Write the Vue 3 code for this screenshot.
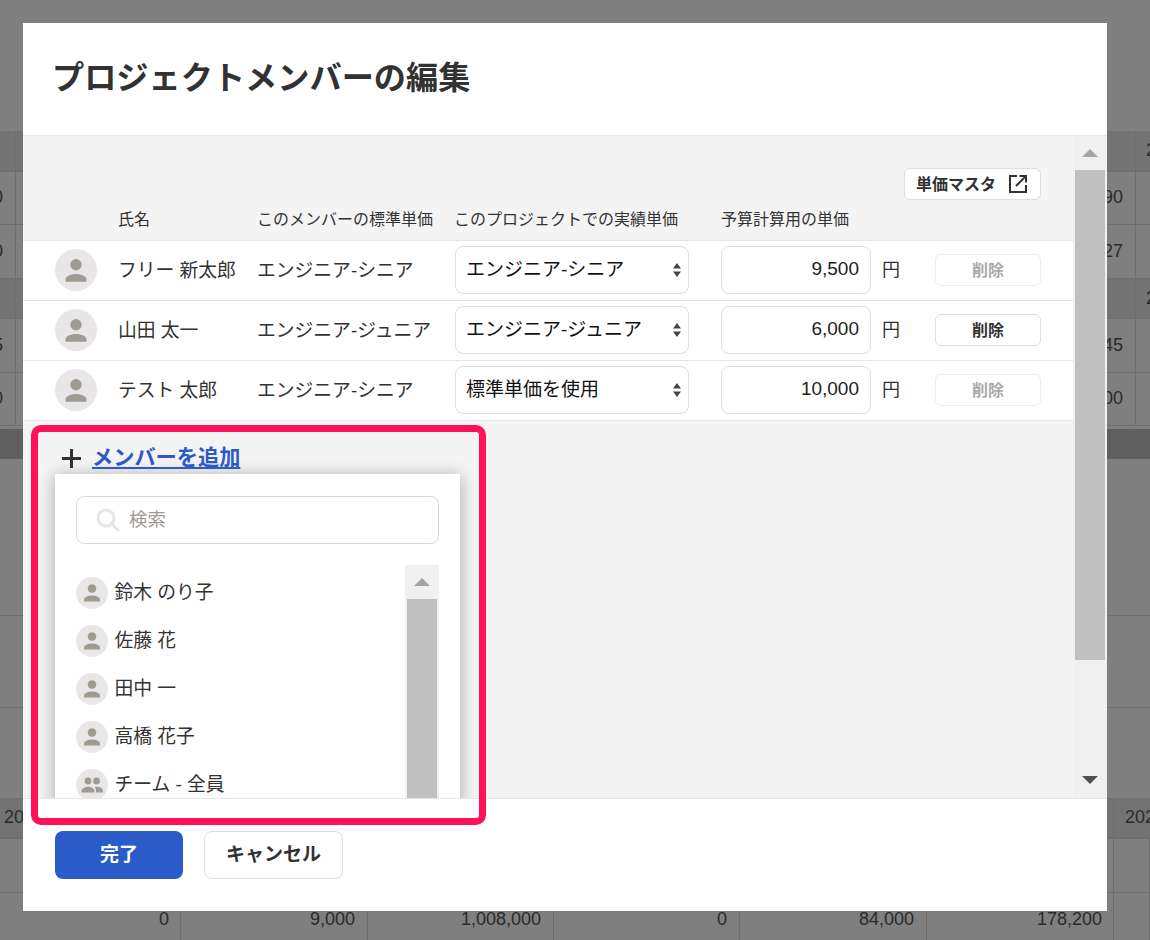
<script setup>
const upperRows = [
  { dark: true, left: '', mid: '', right: '2' },
  { left: '0', mid: '90', right: '' },
  { left: '0', mid: '27', right: '' },
  { dark: true, left: '', mid: '', right: '2' },
  { left: '5', mid: '45', right: '' },
  { left: '0', mid: '00', right: '' }
]
const totals = ['0', '9,000', '1,008,000', '0', '84,000', '178,200', '']
const members = [
  { name: 'フリー 新太郎', std: 'エンジニア-シニア', sel: 'エンジニア-シニア', price: '9,500', canDelete: false },
  { name: '山田 太一', std: 'エンジニア-ジュニア', sel: 'エンジニア-ジュニア', price: '6,000', canDelete: true },
  { name: 'テスト 太郎', std: 'エンジニア-シニア', sel: '標準単価を使用', price: '10,000', canDelete: false }
]
const options = ['標準単価を使用', 'エンジニア-シニア', 'エンジニア-ジュニア']
const candidates = [
  { name: '鈴木 のり子' },
  { name: '佐藤 花' },
  { name: '田中 一' },
  { name: '高橋 花子' },
  { name: 'チーム - 全員', team: true }
]
</script>

<template>
  <div class="page">
    <div class="bg">
      <div class="bg-top"></div>
      <div v-for="(r, i) in upperRows" :key="i" class="bg-row" :class="{ dark: r.dark }">
        <div class="bg-cell">{{ r.left }}</div>
        <div class="bg-cell">{{ r.mid }}</div>
        <div class="bg-cell start">{{ r.right }}</div>
      </div>
      <div class="bg-bar"></div>
      <div class="bg-plain first"></div>
      <div class="bg-plain second"></div>
      <div class="bg-plain third"></div>
      <div class="bg-lower dark short">
        <div class="bg-cell start head-first">2024</div>
        <div class="bg-cell"></div>
        <div class="bg-cell"></div>
        <div class="bg-cell"></div>
        <div class="bg-cell"></div>
        <div class="bg-cell"></div>
        <div class="bg-cell start">2024</div>
      </div>
      <div class="bg-lower mid"><div v-for="n in 7" :key="n" class="bg-cell"></div></div>
      <div class="bg-lower">
        <div v-for="(t, i) in totals" :key="i" class="bg-cell">{{ t }}</div>
      </div>
    </div>

    <div class="overlay">
      <div class="modal">
        <header class="modal-head">
          <h1 class="title">プロジェクトメンバーの編集</h1>
        </header>

        <div class="modal-body">
          <div class="content">
            <div class="tools">
              <button class="btn-small master" type="button">
                <span class="master-label">単価マスタ</span>
                <svg class="ext" viewBox="0 0 18 18" width="18" height="18" fill="none" stroke="#323232" stroke-width="2">
                  <path d="M8 1H1v16h16v-7" />
                  <path d="M7 11 16.600 1.400" />
                  <path d="M10.500 1h6.500v6.500" />
                </svg>
              </button>
            </div>

            <div class="grid head-row">
              <div></div>
              <div class="nudge">氏名</div>
              <div class="nudge">このメンバーの標準単価</div>
              <div class="nudge">このプロジェクトでの実績単価</div>
              <div>予算計算用の単価</div>
            </div>

            <div class="table">
              <div v-for="m in members" :key="m.name" class="grid row">
                <svg class="avatar-lg" viewBox="0 0 32 32">
                  <circle cx="16" cy="16" r="16" fill="#e8e6e6" />
                  <circle cx="16" cy="12" r="4.300" fill="#9f9a92" />
                  <path d="M8 25v-2c0-2.800 5.300-4 8-4s8 1.200 8 4v2z" fill="#9f9a92" />
                </svg>
                <div class="nudge cell-text">{{ m.name }}</div>
                <div class="nudge cell-text">{{ m.std }}</div>
                <div class="select-wrap">
                  <select class="select" :value="m.sel">
                    <option v-for="o in options" :key="o" :value="o">{{ o }}</option>
                  </select>
                  <svg class="updown" viewBox="0 0 8 14" width="8" height="14">
                    <path d="M4 0 8 5.500H0z" fill="#444" />
                    <path d="M4 14 8 8.500H0z" fill="#444" />
                  </svg>
                </div>
                <input class="price" type="text" :value="m.price" />
                <div class="yen">円</div>
                <button class="btn-small del" :class="{ off: !m.canDelete }" type="button">削除</button>
              </div>
            </div>

            <div class="add">
              <svg class="plus" viewBox="0 0 19 19" width="19" height="19" stroke="#323232" stroke-width="3" fill="none">
                <path d="M9.500 0v19M0 9.500h19" />
              </svg>
              <a class="add-link" href="#">メンバーを追加</a>
            </div>

            <div class="dropdown">
              <div class="search">
                <svg class="search-icon" viewBox="0 0 24 24" width="24" height="24" fill="none" stroke="#e6e6e6" stroke-width="3">
                  <circle cx="10" cy="10" r="8" />
                  <path d="M16 16l7 7" />
                </svg>
                <input class="search-input" type="text" placeholder="検索" />
              </div>
              <div class="list-wrap">
                <ul class="list">
                  <li v-for="c in candidates" :key="c.name" class="item">
                    <svg class="avatar-sm" viewBox="0 0 32 32">
                      <circle cx="16" cy="16" r="16" fill="#e8e6e6" />
                      <template v-if="c.team">
                        <circle cx="12" cy="12" r="3.400" fill="#9f9a92" />
                        <circle cx="20.500" cy="12" r="3.400" fill="#9f9a92" />
                        <path d="M5.500 23.500v-1.700c0-2.300 4-4 6.500-4s6.500 1.700 6.500 4v1.700z" fill="#9f9a92" />
                        <path d="M20 23.500v-1.900c0-1.500-.5-2.600-1.400-3.400.7-.2 1.500-.4 2.200-.4 2.500 0 6.200 1.500 6.200 3.800v1.900z" fill="#9f9a92" />
                      </template>
                      <template v-else>
                        <circle cx="16" cy="11.500" r="4.300" fill="#9f9a92" />
                        <path d="M8 24.500v-2c0-2.800 5.300-4 8-4s8 1.200 8 4v2z" fill="#9f9a92" />
                      </template>
                    </svg>
                    <span class="item-name">{{ c.name }}</span>
                  </li>
                </ul>
                <div class="scrollbar">
                  <div class="arrow-box">
                    <svg viewBox="0 0 16 8" width="16" height="8"><path d="M8 0l8 8H0z" fill="#a3a3a3" /></svg>
                  </div>
                  <div class="thumb inner"></div>
                </div>
              </div>
            </div>
          </div>

          <div class="scrollbar main">
            <div class="arrow-box">
              <svg viewBox="0 0 16 8" width="16" height="8"><path d="M8 0l8 8H0z" fill="#a3a3a3" /></svg>
            </div>
            <div class="thumb outer"></div>
            <div class="arrow-box bottom">
              <svg viewBox="0 0 16 8" width="16" height="8"><path d="M8 8l8-8H0z" fill="#505050" /></svg>
            </div>
          </div>
        </div>

        <footer class="modal-foot">
          <button class="btn primary" type="button">完了</button>
          <button class="btn secondary" type="button">キャンセル</button>
        </footer>

        <div class="highlight"></div>
      </div>
    </div>
  </div>
</template>

<style>
html, body { margin: 0; padding: 0; background: #fff; overflow: hidden; }
</style>

<style scoped>
.page {
  position: relative;
  width: 1150px;
  height: 940px;
  overflow: hidden;
  font-family: "Liberation Sans", "Noto Sans CJK JP", sans-serif;
  color: #323232;
}

/* page behind the dialog */
.bg { width: 1150px; height: 940px; overflow: hidden; font-size: 18px; color: #555; background: #fff; }
.bg-top { height: 131px; }
.bg-row {
  display: grid;
  grid-template-columns: 16px 1120px 14px;
  height: 53.500px;
  box-sizing: border-box;
  border-bottom: 1px solid #ddd;
}
.bg-row.dark { height: 40.500px; background: #e6e6e6; }
.bg-cell {
  display: flex;
  align-items: center;
  justify-content: flex-end;
  padding-right: 12px;
  white-space: nowrap;
  border-right: 1px solid #ddd;
  box-sizing: border-box;
  min-width: 0;
}
.bg-cell.start { justify-content: flex-start; padding: 0 0 0 10px; border-right: 0; }
.bg-bar { height: 30px; margin-top: 3px; background: #bfbfbf; }
.bg-plain { border-bottom: 1px solid #ddd; box-sizing: border-box; }
.bg-plain.first { height: 157px; }
.bg-plain.second { height: 92px; }
.bg-plain.third { height: 90px; border-bottom: 0; }
.bg-lower {
  display: grid;
  grid-template-columns: 181px 187px 186px 186px 187px 187px 36px;
  height: 54px;
  box-sizing: border-box;
  border-bottom: 1px solid #ddd;
}
.bg-lower .bg-cell:nth-child(1), .bg-lower .bg-cell:nth-child(6) { padding-right: 11px; }
.bg-lower .bg-cell.start { padding: 0 0 0 11px; }
.bg-lower.dark { background: #e6e6e6; }
.bg-lower.short { height: 41px; border-bottom-width: 2px; }
.bg-lower .bg-cell.head-first { padding-left: 4px; }

/* dialog */
.overlay {
  position: absolute;
  inset: 0;
  display: flex;
  padding: 23px 43px 29px 23px;
  box-sizing: border-box;
  background: rgba(0, 0, 0, 0.5);
}
.modal {
  position: relative;
  flex: 1;
  min-width: 0;
  display: flex;
  flex-direction: column;
  background: #fff;
}
.modal-head {
  flex: none;
  height: 113px;
  box-sizing: border-box;
  display: flex;
  align-items: center;
  padding: 0 0 2px 29px;
  border-bottom: 1px solid #e6e6e6;
}
.title {
  margin: 0;
  font-size: 32.200px;
  font-weight: 700;
  line-height: 1.2;
  color: #323232;
}
.modal-body {
  flex: 1;
  min-height: 0;
  display: flex;
  overflow: hidden;
  background: #f5f4f5;
}
.content { flex: 1; min-width: 0; }
.tools { display: flex; justify-content: flex-end; padding: 32px 32px 0; }

.btn-small {
  box-sizing: border-box;
  height: 32px;
  border: 1px solid #dedede;
  border-radius: 6px;
  background: #fff;
  font-family: inherit;
  font-size: 16px;
  font-weight: 700;
  color: #323232;
  padding: 0 0 2px;
}
.master {
  width: 137px;
  display: flex;
  align-items: center;
  justify-content: flex-start;
  padding: 0 0 0 11px;
}
.master-label { padding-bottom: 2px; }
.ext { margin-left: 13px; }

.grid {
  display: grid;
  grid-template-columns: 64px 139px 197px 266px 161px 53px 106px;
  align-items: center;
  padding: 0 32px;
}
.nudge { margin-left: -1px; }
.head-row { height: 40px; font-size: 16px; padding-bottom: 4px; box-sizing: border-box; }

.table { border-top: 1px solid #e6e6e6; }
.row {
  height: 60px;
  box-sizing: border-box;
  padding-bottom: 1px;
  background: #fff;
  border-bottom: 1px solid #e6e6e6;
  font-size: 18.800px;
  white-space: nowrap;
}
.cell-text, .yen { padding-bottom: 4px; }
.avatar-lg { width: 42px; height: 42px; display: block; }
.select-wrap { position: relative; width: 234px; height: 48px; }
.select {
  appearance: none;
  width: 100%;
  height: 100%;
  box-sizing: border-box;
  border: 1px solid #dedede;
  border-radius: 8px;
  background: #fff;
  font-family: inherit;
  font-size: 19px;
  color: #111;
  padding: 0 30px 2px 10px;
  outline: none;
}
.updown { position: absolute; right: 8px; top: 17px; pointer-events: none; }
.price {
  width: 150px;
  height: 48px;
  box-sizing: border-box;
  border: 1px solid #dedede;
  border-radius: 8px;
  background: #fff;
  font-family: inherit;
  font-size: 19px;
  color: #222;
  text-align: right;
  padding: 0 11px 2px;
  outline: none;
}
.yen { font-size: 18px; }
.del { width: 106px; }
.del.off { color: #a9a9a9; border-color: #eeeeee; }

.add {
  display: flex;
  align-items: center;
  height: 26px;
  padding: 24px 0 3px 39px;
}
.plus { flex: none; }
.add-link {
  margin-left: 11px;
  font-size: 21.200px;
  font-weight: 700;
  line-height: 26px;
  color: #2a5ac8;
  text-decoration: underline;
  text-decoration-thickness: 2px;
  text-underline-offset: 2px;
}

.dropdown {
  margin-left: 32px;
  width: 405px;
  height: 400px;
  box-sizing: border-box;
  padding: 22px 21px 0;
  background: #fff;
  box-shadow: 0 2px 16px rgba(0, 0, 0, 0.32);
  overflow: hidden;
}
.search { position: relative; height: 48px; }
.search-input {
  width: 100%;
  height: 100%;
  box-sizing: border-box;
  border: 1px solid #d9d9d9;
  border-radius: 8px;
  font-family: inherit;
  font-size: 18.500px;
  padding: 0 12px 0 52px;
  outline: none;
  background: #fff;
}
.search-input::placeholder { color: #a09a92; opacity: 1; }
.search-icon { position: absolute; left: 20px; top: 12px; }

.list-wrap { display: flex; margin-top: 21px; height: 320px; }
.list { flex: 1; margin: 0; padding: 12px 0 0; list-style: none; }
.item {
  display: flex;
  align-items: center;
  gap: 7px;
  height: 32px;
  margin-bottom: 16px;
  font-size: 18.800px;
  white-space: nowrap;
}
.item-name { padding-bottom: 5px; margin-left: -0.500px; }
.avatar-sm { width: 32px; height: 32px; flex: none; }

.scrollbar {
  flex: none;
  width: 34px;
  box-sizing: border-box;
  padding: 0 2px;
  display: flex;
  flex-direction: column;
  background: #f0f0f0;
}
.arrow-box {
  height: 34px;
  flex: none;
  display: flex;
  align-items: center;
  justify-content: center;
}
.arrow-box.bottom {
  margin-top: auto;
  align-items: flex-end;
  padding-bottom: 14px;
  box-sizing: border-box;
  height: 40px;
}
.thumb { background: #c0c0c0; }
.thumb.inner { flex: 1; }
.thumb.outer { height: 490px; flex: none; }

.modal-foot {
  flex: none;
  height: 113px;
  box-sizing: border-box;
  border-top: 1px solid #e6e6e6;
  padding: 32px 0 0 32px;
  display: flex;
  align-items: flex-start;
  gap: 21px;
  background: #fff;
  position: relative;
}
.btn {
  height: 48px;
  box-sizing: border-box;
  border-radius: 8px;
  font-family: inherit;
  font-size: 19px;
  font-weight: 700;
  padding: 0 0 5px;
}
.primary { width: 128px; border: 0; background: #2a5bc9; color: #fff; }
.secondary { width: 139px; border: 1px solid #dedede; background: #fff; color: #323232; }

.highlight {
  position: absolute;
  left: 8px;
  top: 402px;
  width: 455px;
  height: 400px;
  box-sizing: border-box;
  border: 7px solid #ff1259;
  border-radius: 10px;
  pointer-events: none;
}
</style>
